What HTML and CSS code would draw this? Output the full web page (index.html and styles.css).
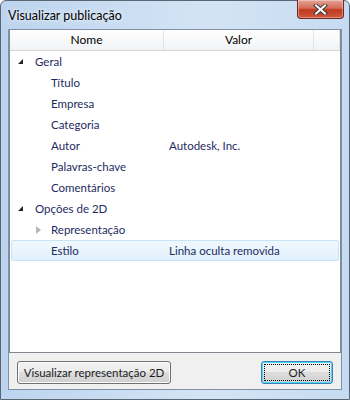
FILE: index.html
```html
<!DOCTYPE html>
<html lang="pt">
<head>
  <meta charset="UTF-8">
  <title>Visualizar publicação</title>
  <link rel="stylesheet" href="styles.css">
</head>
<body>
  <div class="window">
    <div class="titlebar">
      <span class="title">Visualizar publicação</span>
      <div class="close">
        <svg width="15" height="11" viewBox="0 0 15 11">
          <path d="M3 1.5 L12 9.5 M12 1.5 L3 9.5" stroke="#3b3b3b" stroke-width="4" stroke-linecap="square"/>
          <path d="M3 1.5 L12 9.5 M12 1.5 L3 9.5" stroke="#ffffff" stroke-width="2" stroke-linecap="square"/>
        </svg>
      </div>
    </div>

    <div class="client">
      <div class="tree">
        <div class="tree-header">
          <div class="col col-name">Nome</div>
          <div class="col col-value">Valor</div>
          <div class="col col-rest"></div>
        </div>

        <div class="row">
          <span class="arrow open"></span><span class="label lvl1">Geral</span>
        </div>
        <div class="row"><span class="label lvl2">Título</span></div>
        <div class="row"><span class="label lvl2">Empresa</span></div>
        <div class="row"><span class="label lvl2">Categoria</span></div>
        <div class="row"><span class="label lvl2">Autor</span><span class="value">Autodesk, Inc.</span></div>
        <div class="row"><span class="label lvl2">Palavras-chave</span></div>
        <div class="row"><span class="label lvl2">Comentários</span></div>
        <div class="row">
          <span class="arrow open"></span><span class="label lvl1">Opções de 2D</span>
        </div>
        <div class="row">
          <span class="arrow closed"></span><span class="label lvl2">Representação</span>
        </div>
        <div class="row selected"><span class="label lvl2">Estilo</span><span class="value">Linha oculta removida</span></div>
      </div>

      <div class="footer">
        <button class="btn btn-preview">Visualizar representação 2D</button>
        <button class="btn btn-default"><span class="focus">OK</span></button>
      </div>
    </div>
  </div>
</body>
</html>
```

FILE: styles.css
```css
body {
  margin: 0;
  font-family: Lato, "Noto Sans", sans-serif;
  font-size: 12px;
}

.window {
  width: 350px;
  height: 400px;
  box-sizing: border-box;
  border: 1px solid #5b6675;
  border-radius: 6px 6px 0 0;
  background: linear-gradient(to right, #bcd4ee 0%, #d4e4f5 60%, #c6dbf1 100%);
  display: flex;
  flex-direction: column;
  padding: 0 7px 9px 7px;
}

.titlebar {
  height: 28px;
  display: flex;
  justify-content: space-between;
  align-items: flex-start;
}

.title {
  margin-top: 7px;
  font-size: 12.5px;
  color: #000;
  text-shadow: 0 0 6px #eaf2fb, 0 0 3px #eaf2fb;
}

.close {
  width: 45px;
  height: 18px;
  margin-right: -2px;
  margin-top: -1px;
  border: 1px solid #6a2a1e;
  border-top: none;
  border-radius: 0 0 4px 4px;
  background: linear-gradient(to bottom, #e5a396 0%, #d46c59 45%, #c0391f 55%, #d0583d 100%);
  display: flex;
  justify-content: center;
  align-items: center;
  box-shadow: inset 0 0 0 1px rgba(255,255,255,0.35);
}

.client {
  flex: 1;
  background: #f0f0f0;
  border: 1px solid #7f90a8;
  display: flex;
  flex-direction: column;
}

.tree {
  flex: 1;
  background: #fff;
  border: 1px solid #828790;
  border-top: none;
}

.tree-header {
  display: flex;
  height: 20px;
  background: linear-gradient(to bottom, #ffffff 0%, #f7f8f9 60%, #f1f2f4 100%);
  border-bottom: 1px solid #d5d5d5;
}

.col {
  color: #000;
  font-size: 12px;
  line-height: 20px;
  text-align: center;
  border-right: 1px solid #e3e4e6;
}

.col-name {
  width: 153px;
}

.col-value {
  width: 149px;
}

.col-rest {
  width: 25px;
}

.row {
  height: 21px;
  display: flex;
  align-items: center;
  color: #1e2b62;
  font-size: 11.5px;
}

.label {
  display: inline-block;
}

.lvl1 {
  margin-left: 12px;
}

.lvl2 {
  width: 118px;
  margin-left: 41px;
}

.arrow {
  width: 0;
  height: 0;
  margin-left: 8px;
}

.arrow.open {
  border-left: 5px solid transparent;
  border-bottom: 5px solid #262626;
}

.arrow.closed {
  margin-left: 26px;
  border-top: 4px solid transparent;
  border-bottom: 4px solid transparent;
  border-left: 5px solid #b8b8b8;
}

.arrow + .lvl2 {
  margin-left: 10px;
}

.selected {
  margin: 0 1px;
  border: 1px solid #c7e4f7;
  border-radius: 2px;
  height: 19px;
  background: linear-gradient(to bottom, #f1f8fd 0%, #e0f1fc 100%);
}

.selected .lvl2 {
  margin-left: 39px;
}

.footer {
  height: 36px;
  display: flex;
  justify-content: space-between;
  align-items: center;
  padding: 0 8px 0 8px;
}

.btn {
  font-family: Lato, "Noto Sans", sans-serif;
  font-size: 11.5px;
  color: #1b1b1b;
  height: 23px;
  border: 1px solid #707070;
  border-radius: 3px;
  background: linear-gradient(to bottom, #f2f2f2 0%, #ebebeb 49%, #dddddd 50%, #cfcfcf 100%);
  box-shadow: inset 0 0 0 1px #fcfcfc;
  padding: 0;
  margin-top: 2px;
}

.btn-preview {
  width: 154px;
}

.btn-default {
  width: 72px;
  border-color: #3c7fb1;
  box-shadow: inset 0 0 0 1px #48d8fb;
  padding: 2px;
}

.btn-default .focus {
  display: block;
  height: 15px;
  line-height: 15px;
  border: 1px dotted #000;
}
```
